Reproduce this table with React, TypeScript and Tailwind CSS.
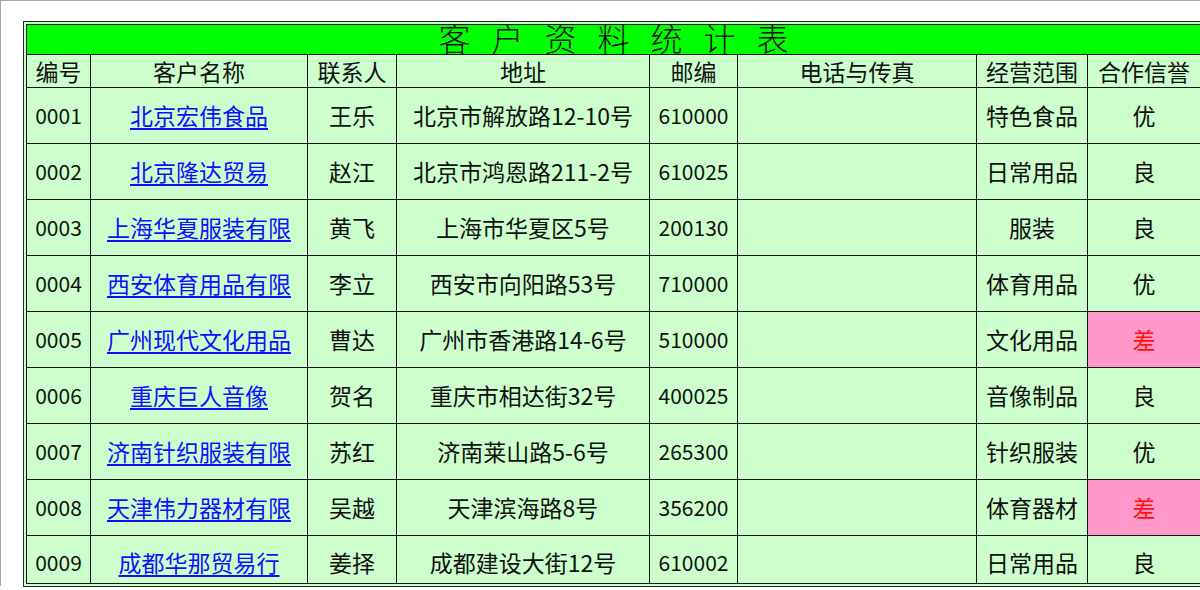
const rows = [
  ["0001", "北京宏伟食品", "王乐", "北京市解放路12-10号", "610000", "", "特色食品", "优"],
  ["0002", "北京隆达贸易", "赵江", "北京市鸿恩路211-2号", "610025", "", "日常用品", "良"],
  ["0003", "上海华夏服装有限", "黄飞", "上海市华夏区5号", "200130", "", "服装", "良"],
  ["0004", "西安体育用品有限", "李立", "西安市向阳路53号", "710000", "", "体育用品", "优"],
  ["0005", "广州现代文化用品", "曹达", "广州市香港路14-6号", "510000", "", "文化用品", "差"],
  ["0006", "重庆巨人音像", "贺名", "重庆市相达街32号", "400025", "", "音像制品", "良"],
  ["0007", "济南针织服装有限", "苏红", "济南莱山路5-6号", "265300", "", "针织服装", "优"],
  ["0008", "天津伟力器材有限", "吴越", "天津滨海路8号", "356200", "", "体育器材", "差"],
  ["0009", "成都华那贸易行", "姜择", "成都建设大街12号", "610002", "", "日常用品", "良"],
];

const headers = ["编号", "客户名称", "联系人", "地址", "邮编", "电话与传真", "经营范围", "合作信誉"];

const cell = "flex items-center justify-center border-r border-b border-[#151515] whitespace-nowrap overflow-hidden";

export default function App() {
  return (
    <div className="w-[1200px] h-[590px] overflow-hidden bg-white font-['Noto_Sans_CJK_SC',sans-serif] text-[23px] text-[#111]">
      <div className="h-[586px] border-t border-l border-[#a8a8a8]">
        <div className="ml-[22px] mt-[20px] w-max border border-[#1c2e1c] p-[2px] bg-[#ccffcc]">
          <div className="grid grid-cols-[64px_217px_89px_253px_88px_239px_111px_113px] border-l border-t border-[#151515]">
            <div className="col-span-8 h-[30px] bg-[#00ff00] border-r border-b border-[#151515] overflow-hidden flex justify-center">
              <span className="text-[32px] leading-[30px] font-light tracking-[21px] pl-[21px] -mt-[3px]">客户资料统计表</span>
            </div>

            {headers.map((h) => (
              <div key={h} className={`${cell} h-[33px]`}>
                <span className="leading-[26px]">{h}</span>
              </div>
            ))}

            {rows.map((r, i) => {
              const last = i === rows.length - 1;
              const h = last ? "h-[48px] pt-[6px]" : "h-[56px]";
              return r.map((v, j) => (
                <div
                  key={`${i}-${j}`}
                  className={`${cell} ${h} ${j === 0 || j === 4 ? "text-[21px]" : ""} ${
                    j === 7 && v === "差" ? "bg-[#ff99cc] text-[#ff1010]" : ""
                  }`}
                >
                  {j === 1 ? (
                    <a href="#" className="text-[#1010ff] underline underline-offset-[3px]">
                      {v}
                    </a>
                  ) : (
                    v
                  )}
                </div>
              ));
            })}
          </div>
        </div>
      </div>
    </div>
  );
}
